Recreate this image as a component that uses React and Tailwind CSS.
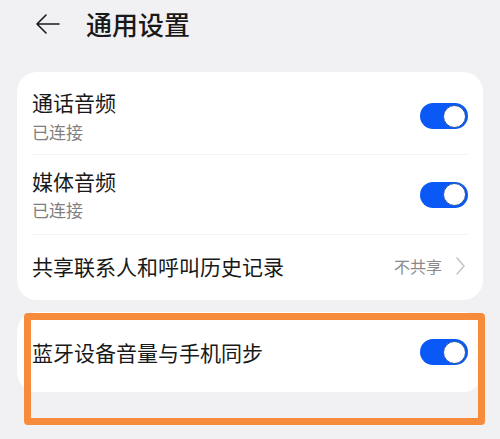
import React from 'react';

const font = { fontFamily: '"Noto Sans CJK SC", "Noto Sans", sans-serif' };

const Toggle = () => (
  <div className="w-[48px] h-[26px] rounded-full bg-[#0a59f7] flex items-center justify-end pr-[2px] shrink-0">
    <div className="w-[23px] h-[23px] rounded-full bg-white border-[1.5px] border-[#24509f]" />
  </div>
);

export default function App() {
  return (
    <div className="w-[500px] min-h-[439px] bg-[#f1f1f3] text-[#191919]" style={font}>
      {/* Header */}
      <div className="h-[48px] flex items-center">
        <svg className="ml-[35px] w-[25px] h-[22px]" viewBox="0 0 25 22" fill="none" stroke="#1a1a1a" strokeWidth="1.6" strokeLinecap="round" strokeLinejoin="round">
          <path d="M24 11H2M11 2L2 11l9 9" />
        </svg>
        <span className="ml-[26px] text-[26px] leading-[34px] font-medium">通用设置</span>
      </div>

      <div className="px-[17px] pt-[24px]">
        {/* Card 1 */}
        <div className="bg-white rounded-[20px]">
          <div className="flex items-center justify-between pl-[15px] pr-[15px] pt-[17px] pb-[11px]">
            <div>
              <div className="text-[21px] leading-[26px]">通话音频</div>
              <div className="mt-[6px] text-[17px] leading-[22px] text-[#7f7f7f]">已连接</div>
            </div>
            <Toggle />
          </div>
          <div className="mx-[15px] h-px bg-[#f3f3f3]" />
          <div className="flex items-center justify-between pl-[15px] pr-[15px] pt-[13px] pb-[13px]">
            <div>
              <div className="text-[21px] leading-[26px]">媒体音频</div>
              <div className="mt-[5px] text-[17px] leading-[22px] text-[#7f7f7f]">已连接</div>
            </div>
            <Toggle />
          </div>
          <div className="mx-[15px] h-px bg-[#f3f3f3]" />
          <div className="h-[65px] flex items-center justify-between pl-[15px] pr-[18px] pb-[4px]">
            <div className="text-[21px] leading-[26px]">共享联系人和呼叫历史记录</div>
            <div className="flex items-center gap-[14px]">
              <span className="text-[16px] leading-[20px] text-[#8a8a8a]">不共享</span>
              <svg className="w-[9px] h-[18px]" viewBox="0 0 9 18" fill="none" stroke="#c4c4c4" strokeWidth="1.5" strokeLinecap="round" strokeLinejoin="round">
                <path d="M1 1l7 8-7 8" />
              </svg>
            </div>
          </div>
        </div>

        {/* Card 2 with highlight */}
        <div className="relative mt-[12px]">
          <div className="bg-white rounded-[20px] h-[80px] flex items-center justify-between pl-[15px] pr-[15px]">
            <div className="text-[21px] leading-[26px]">蓝牙设备音量与手机同步</div>
            <Toggle />
          </div>
          <div className="absolute left-[7px] top-[1px] w-[461px] h-[112px] border-[7px] border-[#f68b3b] rounded-[4px]" />
        </div>
      </div>
    </div>
  );
}
